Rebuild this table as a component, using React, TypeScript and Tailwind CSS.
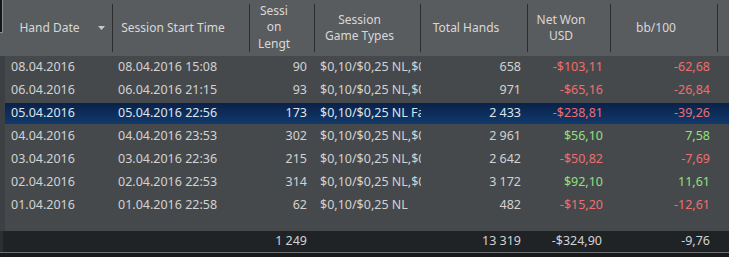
import React from "react";

interface Row {
  date: string;
  start: string;
  len: string;
  games: string;
  hands: string;
  won: string;
  bb: string;
  selected?: boolean;
}

const ROWS: Row[] = [
  { date: "08.04.2016", start: "08.04.2016 15:08", len: "90", games: "$0,10/$0,25 NL,$0,05", hands: "658", won: "-$103,11", bb: "-62,68" },
  { date: "06.04.2016", start: "06.04.2016 21:15", len: "93", games: "$0,10/$0,25 NL,$0,05", hands: "971", won: "-$65,16", bb: "-26,84" },
  { date: "05.04.2016", start: "05.04.2016 22:56", len: "173", games: "$0,10/$0,25 NL Fast", hands: "2 433", won: "-$238,81", bb: "-39,26", selected: true },
  { date: "04.04.2016", start: "04.04.2016 23:53", len: "302", games: "$0,10/$0,25 NL,$0,05", hands: "2 961", won: "$56,10", bb: "7,58" },
  { date: "03.04.2016", start: "03.04.2016 22:36", len: "215", games: "$0,10/$0,25 NL,$0,05", hands: "2 642", won: "-$50,82", bb: "-7,69" },
  { date: "02.04.2016", start: "02.04.2016 22:53", len: "314", games: "$0,10/$0,25 NL,$0,05", hands: "3 172", won: "$92,10", bb: "11,61" },
  { date: "01.04.2016", start: "01.04.2016 22:58", len: "62", games: "$0,10/$0,25 NL", hands: "482", won: "-$15,20", bb: "-12,61" },
];

const tone = (v: string) => (v.startsWith("-") ? "text-[#ee6e6e]" : "text-[#90e07c]");

function Head({ w, children, sort }: { w: string; children: React.ReactNode; sort?: boolean }) {
  return (
    <div className={`${w} shrink-0 flex border-r border-[#2b2d2f]`}>
      <div className="flex-1 flex items-center justify-center text-center leading-[16.5px]">{children}</div>
      <div className="w-[16px] flex items-center">
        {sort && (
          <svg width="8" height="5" viewBox="0 0 8 5" className="ml-[2px]">
            <path d="M0 0h7L3.5 4z" fill="#c8c8c8" />
          </svg>
        )}
      </div>
    </div>
  );
}

export default function App() {
  return (
    <div
      className="w-[729px] h-[257px] overflow-hidden bg-[#46494c] text-[#d2d2d2] flex flex-col"
      style={{ fontFamily: '"Noto Sans", "Open Sans", sans-serif' }}
    >
      {/* header */}
      <div className="h-[56px] shrink-0 bg-[#595c5f] flex text-[12px] text-[#d8d8d8]">
        <div className="w-[3px] h-[33px] shrink-0 bg-[#141516] border-r border-b border-[#8a8d90]" />
        <div className="flex py-[4px]">
          <Head w="w-[110px]" sort>Hand Date</Head>
          <Head w="w-[137px]">Session Start Time</Head>
          <Head w="w-[65px]">
            <span className="-mt-[1px]">
              Sessi
              <br />
              on
              <br />
              Lengt
            </span>
          </Head>
          <Head w="w-[106px]">
            <span>
              Session
              <br />
              Game Types
            </span>
          </Head>
          <Head w="w-[107px]">Total Hands</Head>
          <Head w="w-[83px]">
            <span>
              Net Won
              <br />
              USD
            </span>
          </Head>
          <Head w="w-[107px]">bb/100</Head>
        </div>
      </div>

      {/* body */}
      <div className="flex-1 flex">
        <div className="w-[5px] shrink-0 bg-[#3d4043]" />
        <div className="flex-1 flex flex-col text-[12.5px]">
          {ROWS.map((r) => (
            <div key={r.date} className="h-[23px] py-[1px]">
              <div
                className={`h-full flex items-center whitespace-nowrap ${
                  r.selected ? "bg-gradient-to-b from-[#0a2149] to-[#103a6c] text-[#dfe4ea]" : ""
                }`}
              >
                <div className="w-[108px] shrink-0 pl-[6px]">{r.date}</div>
                <div className="w-[137px] shrink-0 pl-[5px]">{r.start}</div>
                <div className="w-[65px] shrink-0 pr-[8px] text-right">{r.len}</div>
                <div className="w-[106px] shrink-0 pl-[5px] overflow-hidden">{r.games}</div>
                <div className="w-[107px] shrink-0 pr-[7px] text-right">{r.hands}</div>
                <div className={`w-[83px] shrink-0 pr-[8px] text-right ${tone(r.won)}`}>{r.won}</div>
                <div className={`w-[107px] shrink-0 pr-[8px] text-right ${tone(r.bb)}`}>{r.bb}</div>
              </div>
            </div>
          ))}
        </div>
      </div>

      {/* footer */}
      <div className="h-[21px] shrink-0 flex bg-[#202326] text-[12.5px] text-[#d2d2d2]">
        <div className="w-[3px] shrink-0 bg-[#2c2f32]" />
        <div className="flex items-center whitespace-nowrap pl-[2px]">
          <div className="w-[108px] shrink-0" />
          <div className="w-[137px] shrink-0" />
          <div className="w-[65px] shrink-0 pr-[8px] text-right">1 249</div>
          <div className="w-[106px] shrink-0" />
          <div className="w-[107px] shrink-0 pr-[7px] text-right">13 319</div>
          <div className="w-[83px] shrink-0 pr-[9px] text-right">-$324,90</div>
          <div className="w-[107px] shrink-0 pr-[8px] text-right">-9,76</div>
        </div>
      </div>
      <div className="h-[1px] shrink-0 bg-[#6f7275]" />
      <div className="h-[4px] shrink-0 bg-[#17191b]" />
    </div>
  );
}
